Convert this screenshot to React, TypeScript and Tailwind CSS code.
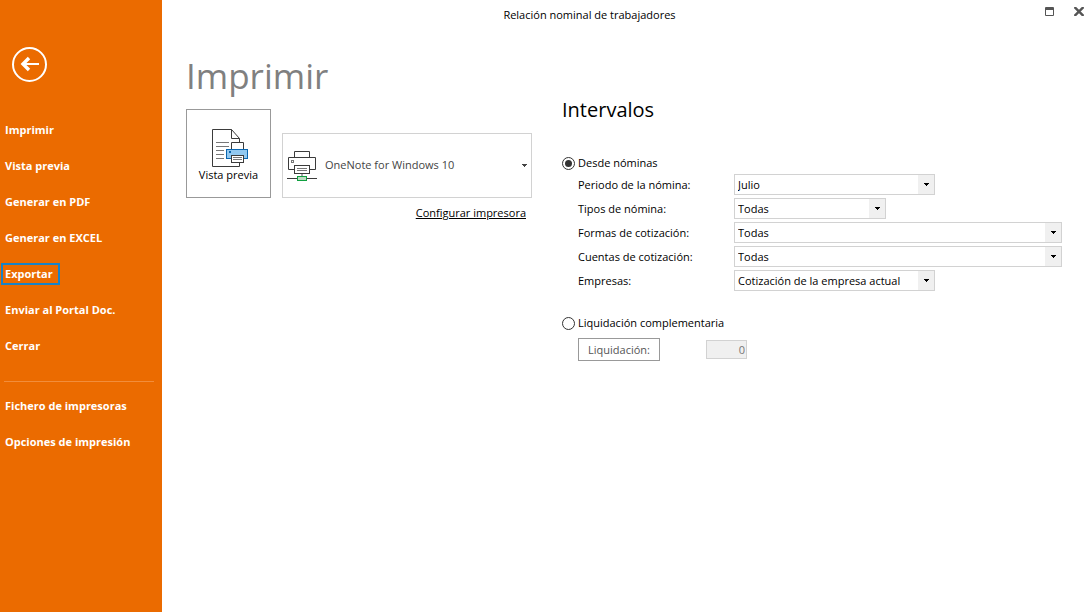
import { useState } from "react";

const menuItems = ["Imprimir", "Vista previa", "Generar en PDF", "Generar en EXCEL", "Exportar", "Enviar al Portal Doc.", "Cerrar"];
const extraItems = ["Fichero de impresoras", "Opciones de impresión"];

const filters = [
  { id: "periodo", label: "Periodo de la nómina:", value: "Julio", width: "w-[201px]" },
  { id: "tipos", label: "Tipos de nómina:", value: "Todas", width: "w-[152px]" },
  { id: "formas", label: "Formas de cotización:", value: "Todas", width: "flex-1" },
  { id: "cuentas", label: "Cuentas de cotización:", value: "Todas", width: "flex-1" },
  { id: "empresas", label: "Empresas:", value: "Cotización de la empresa actual", width: "w-[201px]" },
];

function BackIcon() {
  return (
    <svg width="35" height="35" viewBox="0 0 35 35" fill="none" stroke="#fff">
      <circle cx="17.5" cy="17.5" r="16.5" strokeWidth="2" />
      <path d="M27 17H11" strokeWidth="2" />
      <path d="M17 11L11 17L17 23" strokeWidth="3.4" />
    </svg>
  );
}

function PreviewIcon() {
  return (
    <svg width="37" height="38" viewBox="0 0 37 38" fill="none" stroke="#3b3b3b">
      <path d="M27.5 34V37.5H.5V.5H19.5L27.5 9.5V13" />
      <path d="M19.5 .5V9.5H27.5" />
      <path d="M4 13.5H17M4 17.5H17M4 21.5H12M4 25.5H12M4 29.5H12" stroke="#777" />
      <path d="M19.5 20V13.5H31.5V20" fill="#fff" />
      <rect x="14.5" y="20.5" width="21" height="9" fill="#91c8f0" stroke="#0a66b0" />
      <rect x="17" y="22" width="2" height="2" fill="#0a66b0" stroke="none" />
      <rect x="19.5" y="26.5" width="12" height="7" fill="#fff" />
      <path d="M21 28.5H30M21 30.5H30" stroke="#777" />
    </svg>
  );
}

function PrinterIcon() {
  return (
    <svg width="30" height="30" viewBox="0 0 30 30" fill="none" stroke="#3b3b3b">
      <path d="M7.5 6.5V.5H22.5V6.5" />
      <path d="M7 18.5H1.5V6.5H28.5V18.5H23" />
      <rect x="4.5" y="9.5" width="2" height="2" stroke="#777" />
      <rect x="7.5" y="14.5" width="15" height="8" />
      <path d="M10 17.5H20M10 19.5H20" stroke="#777" />
      <path d="M15 23V25" stroke="#aaa" strokeWidth="2" />
      <path d="M0 27.5H10M20 27.5H30" />
      <rect x="10.5" y="25.5" width="9" height="4" fill="#bfdcc3" stroke="#10a040" />
    </svg>
  );
}

function Caret() {
  return (
    <svg width="5" height="3" viewBox="0 0 5 3" shapeRendering="crispEdges">
      <path d="M0 0H5V1H4V2H3V3H2V2H1V1H0Z" fill="currentColor" />
    </svg>
  );
}

function MenuLink({ text, active }: { text: string; active?: boolean }) {
  return (
    <li className="flex h-9 items-center">
      <a href="#" className={`flex h-[22px] items-center border-2 px-0.5 ${active ? "border-[#1883c8] pr-[5px]" : "border-transparent"}`}>
        {text}
      </a>
    </li>
  );
}

export default function App() {
  const [mode, setMode] = useState("nominas");

  return (
    <div className="flex min-h-screen bg-white font-['Open_Sans','Noto_Sans',sans-serif] text-[11px] text-black">
      <aside className="w-[162px] shrink-0 bg-[#eb6b00] pt-[47px] font-bold whitespace-nowrap text-white">
        <button type="button" aria-label="Volver" className="ml-3 block">
          <BackIcon />
        </button>
        <nav className="mt-[30px]">
          <ul className="px-px">
            {menuItems.map((item) => (
              <MenuLink key={item} text={item} active={item === "Exportar"} />
            ))}
          </ul>
          <hr className="mx-1 mt-[17px] mr-2 mb-1.5 border-[#f28d3b]" />
          <ul className="px-px">
            {extraItems.map((item) => (
              <MenuLink key={item} text={item} />
            ))}
          </ul>
        </nav>
      </aside>

      <div className="min-w-0 flex-1">
        <header className="flex h-[30px] items-center">
          <span className="flex-1 text-center">Relación nominal de trabajadores</span>
          <div className="flex w-[75px] justify-end pb-2 text-[#555]">
            <button type="button" aria-label="Maximizar" className="flex w-[31px] justify-center">
              <svg width="9" height="9" viewBox="0 0 9 9" fill="none" stroke="currentColor">
                <path d="M.5 .5H8.5V8.5H.5ZM0 1.5H9M0 2.5H9" />
              </svg>
            </button>
            <button type="button" aria-label="Cerrar ventana" className="flex w-[27px] justify-center">
              <svg width="10" height="9" viewBox="0 0 10 9" stroke="currentColor" strokeWidth="2.4">
                <path d="M.5 0L9.5 9M9.5 0L.5 9" />
              </svg>
            </button>
          </div>
        </header>

        <main className="flex pr-[30px] pl-6">
          <section className="w-[346px] shrink-0 pt-5">
            <h1 className="h-[59px] text-[35px] leading-[52px] text-[#808080]">Imprimir</h1>
            <div className="flex items-end gap-[11px]">
              <button type="button" className="flex h-[89px] w-[85px] flex-col items-center justify-center border border-[#999] pt-1">
                <span className="ml-1">
                  <PreviewIcon />
                </span>
                <span className="leading-[15px]">Vista previa</span>
              </button>
              <div className="relative h-[65px] flex-1">
                <select aria-label="Impresora" className="h-full w-full appearance-none border border-[#d2d2d2] bg-white pl-[42px] text-[#444]">
                  <option>OneNote for Windows 10</option>
                </select>
                <span className="pointer-events-none absolute inset-y-0 left-[5px] flex items-center">
                  <PrinterIcon />
                </span>
                <span className="pointer-events-none absolute inset-y-0 right-[5px] flex items-center text-[#444]">
                  <Caret />
                </span>
              </div>
            </div>
            <div className="mt-[7px] mr-1.5 text-right">
              <a href="#" className="underline">Configurar impresora</a>
            </div>
          </section>

          <section className="ml-[30px] min-w-0 flex-1 pt-16">
            <h2 className="text-[20px] leading-8">Intervalos</h2>
            <label className="mt-7 flex h-[18px] items-center gap-[3px]">
              <input
                type="radio"
                name="modo"
                checked={mode === "nominas"}
                onChange={() => setMode("nominas")}
                className="size-[13px] appearance-none rounded-full border border-[#333] bg-white bg-clip-content p-0.5 checked:bg-[#333]"
              />
              Desde nóminas
            </label>
            <div className="mt-0.5 flex flex-col gap-[3px] pl-4">
              {filters.map((f) => (
                <div key={f.id} className="flex h-[21px] items-center">
                  <label htmlFor={f.id} className="w-[156px] shrink-0 pt-0.5">{f.label}</label>
                  <div className={`relative h-full ${f.width}`}>
                    <select id={f.id} className="block h-full w-full appearance-none border border-[#d2d2d2] bg-white pt-0.5 pl-[3px]">
                      <option>{f.value}</option>
                    </select>
                    <span className="pointer-events-none absolute inset-y-px right-px flex w-4 items-center justify-center bg-[#f0f0f0]">
                      <Caret />
                    </span>
                  </div>
                </div>
              ))}
            </div>
            <label className="mt-[23px] flex h-[18px] items-center gap-[3px]">
              <input
                type="radio"
                name="modo"
                checked={mode === "liquidacion"}
                onChange={() => setMode("liquidacion")}
                className="size-[13px] appearance-none rounded-full border border-[#333] bg-white bg-clip-content p-0.5 checked:bg-[#333]"
              />
              Liquidación complementaria
            </label>
            <div className="mt-1.5 flex items-center gap-[46px] pl-4">
              <button type="button" className="h-[23px] w-[82px] border border-[#999] pt-0.5 text-[#555]">Liquidación:</button>
              <input
                type="text"
                aria-label="Liquidación"
                defaultValue="0"
                disabled
                className="h-[19px] w-[41px] border border-[#d2d2d2] bg-[#f0f0f0] pr-px text-right text-[#777]"
              />
            </div>
          </section>
        </main>
      </div>
    </div>
  );
}
